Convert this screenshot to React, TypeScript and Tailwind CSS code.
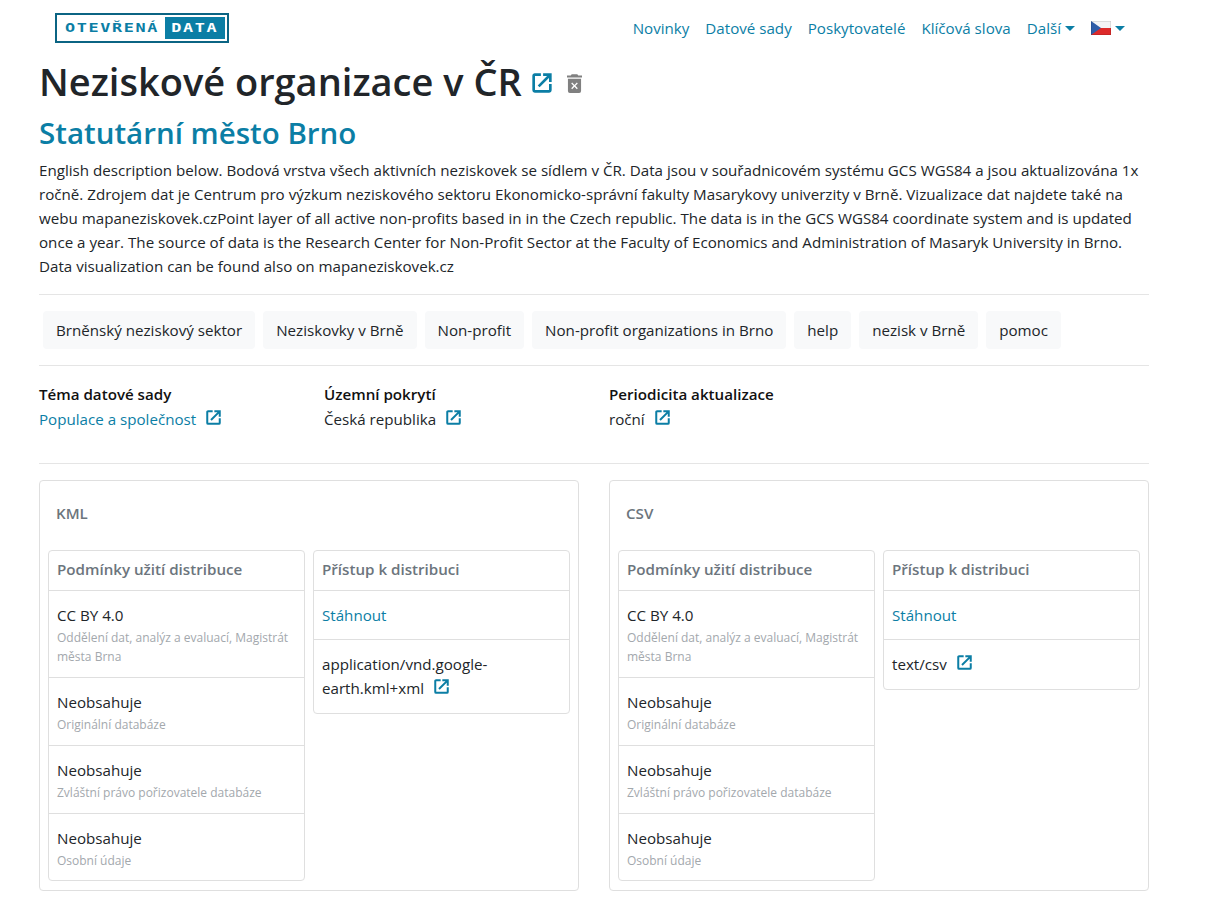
const LINK = "text-[#0b7ea5]"

function OpenIcon({ className = "h-[15px] w-[15px]" }: { className?: string }) {
  return (
    <svg viewBox="0 0 18 18" className={`${className} ${LINK} inline-block shrink-0`} fill="none" stroke="currentColor" strokeWidth="2.400">
      <path d="M8 1.500H2.500a1 1 0 0 0-1 1v13a1 1 0 0 0 1 1h13a1 1 0 0 0 1-1V10" />
      <path d="M6 12 15.500 2.500M10 1.500h6.500V8" />
    </svg>
  )
}

function TrashIcon() {
  return (
    <svg viewBox="0 0 16 20" className="h-[19px] w-[15px] text-[#808080]" fill="currentColor">
      <path d="M5 0h6l1 1.500h4v2H0v-2h4zM1 5h14v13a2 2 0 0 1-2 2H3a2 2 0 0 1-2-2z" />
      <path d="m5.500 9 2.500 2.500L10.500 9l1 1-2.500 2.500L11.500 15l-1 1L8 13.500 5.500 16l-1-1L7 12.500 4.500 10z" fill="#fff" />
    </svg>
  )
}

function Caret() {
  return <span className="ml-1 inline-block h-0 w-0 border-x-[5px] border-t-[5px] border-x-transparent border-t-[#0b7ea5] align-[3px]" />
}

function Flag() {
  return (
    <svg viewBox="0 0 20 14" className="h-[14px] w-[20px]">
      <rect width="20" height="7" fill="#f4f4f6" />
      <rect y="7" width="20" height="7" fill="#dd2a2a" />
      <path d="M0 0 10 7 0 14z" fill="#2f5da8" />
      <rect x=".25" y=".25" width="19.500" height="13.500" fill="none" stroke="#00000033" strokeWidth=".5" />
    </svg>
  )
}

function Logo() {
  return (
    <div className="flex h-[30px] w-[174px] items-center border-2 border-[#0b6483] pl-[8px] pr-[2px] font-['DejaVu_Sans_Mono',monospace] text-[12px] font-bold leading-none tracking-[1.170px]">
      <span className="flex-1 text-[#0b7ea5]">
        <span className="inline-block origin-left scale-x-[1.4]">OTEVŘENÁ</span>
      </span>
      <span className="flex h-[22px] w-[60px] items-center justify-center bg-[#0b7ea5] text-white">
        <span className="inline-block scale-x-[1.4]">DATA</span>
      </span>
    </div>
  )
}

const NAV = ["Novinky", "Datové sady", "Poskytovatelé", "Klíčová slova"]
const TAGS = ["Brněnský neziskový sektor", "Neziskovky v Brně", "Non-profit", "Non-profit organizations in Brno", "help", "nezisk v Brně", "pomoc"]

const TERMS = [
  { title: "CC BY 4.0", note: "Oddělení dat, analýz a evaluací, Magistrát města Brna" },
  { title: "Neobsahuje", note: "Originální databáze" },
  { title: "Neobsahuje", note: "Zvláštní právo pořizovatele databáze" },
  { title: "Neobsahuje", note: "Osobní údaje" },
]

function Distribution({ name, format }: { name: string; format: string }) {
  return (
    <div className="h-[411px] w-[540px] rounded border border-[#dfdfdf] p-2">
      <h5 className="h-[61px] px-2 pt-[12px] leading-6 font-semibold text-[#6c757d]">{name}</h5>
      <div className="flex gap-2">
        <div className="w-[257px] rounded border border-[#dfdfdf]">
          <div className="h-[40px] border-b border-[#dfdfdf] px-2 py-[6px] leading-6 font-semibold text-[#6c757d]">Podmínky užití distribuce</div>
          {TERMS.map((t, i) => (
            <div key={i} className="border-b border-[#dfdfdf] px-2 pt-[12px] pb-[10.600px] last:border-b-0">
              <div className="leading-6 text-[#212529]">{t.title}</div>
              <div className="mt-[1px] text-[12px] leading-[19.200px] text-[#a3a8ad]">{t.note}</div>
            </div>
          ))}
        </div>
        <div className="w-[257px] self-start rounded border border-[#dfdfdf]">
          <div className="h-[40px] border-b border-[#dfdfdf] px-2 py-[6px] leading-6 font-semibold text-[#6c757d]">Přístup k distribuci</div>
          <div className={`border-b border-[#dfdfdf] px-2 py-3 leading-6 ${LINK}`}>Stáhnout</div>
          <div className="px-2 pt-[12px] pb-[13px] leading-6 text-[#212529]">
            {format}
            <span className="-my-2 ml-[10px] inline-block align-[3px]"><OpenIcon /></span>
          </div>
        </div>
      </div>
    </div>
  )
}

export default function App() {
  return (
    <div className="min-h-[904px] bg-white font-['Open_Sans','Noto_Sans',sans-serif] text-[15.150px] leading-6 text-[#212529]">
      <div className="ml-[39px] w-[1110px]">
        <header className="flex h-[56px] items-center justify-between pl-4 pr-6">
          <Logo />
          <nav className={`flex items-center gap-4 ${LINK}`}>
            {NAV.map((n) => <a key={n}>{n}</a>)}
            <a>Další<Caret /></a>
            <a className="flex items-center"><Flag /><Caret /></a>
          </nav>
        </header>

        <div className="flex items-center gap-[10px]">
          <h1 className="text-[38px] leading-[50px] font-semibold">Neziskové organizace v ČR</h1>
          <span className="mt-[4px] flex"><OpenIcon className="h-[20px] w-[20px]" /></span>
          <span className="mt-[4px] ml-[5px] flex"><TrashIcon /></span>
        </div>
        <h2 className={`mt-[5px] text-[29.500px] leading-[44px] font-semibold ${LINK}`}>Statutární město Brno</h2>
        <p className="mt-[3px] pb-[10px]">English description below. Bodová vrstva všech aktivních neziskovek se sídlem v ČR. Data jsou v souřadnicovém systému GCS WGS84 a jsou aktualizována 1x ročně. Zdrojem dat je Centrum pro výzkum neziskového sektoru Ekonomicko-správní fakulty Masarykovy univerzity v Brně. Vizualizace dat najdete také na webu mapaneziskovek.czPoint layer of all active non-profits based in in the Czech republic. The data is in the GCS WGS84 coordinate system and is updated once a year. The source of data is the Research Center for Non-Profit Sector at the Faculty of Economics and Administration of Masaryk University in Brno. Data visualization can be found also on mapaneziskovek.cz</p>

        <hr className="mt-[6px] border-[#e5e5e5]" />
        <div className="flex gap-2 px-1 py-4">
          {TAGS.map((t) => (
            <span key={t} className="rounded bg-[#f8f9fa] px-[13px] py-[7px]">{t}</span>
          ))}
        </div>
        <hr className="border-[#e5e5e5]" />

        <div className="grid h-[97px] grid-cols-[285px_285px_285px] pt-[16px]">
          <div>
            <div className="font-semibold text-[#111]">Téma datové sady</div>
            <div className="mt-[1px]"><span className={LINK}>Populace a společnost</span><span className="-my-2 ml-[10px] inline-block align-[3px]"><OpenIcon /></span></div>
          </div>
          <div>
            <div className="font-semibold text-[#111]">Územní pokrytí</div>
            <div className="mt-[1px]">Česká republika<span className="-my-2 ml-[10px] inline-block align-[3px]"><OpenIcon /></span></div>
          </div>
          <div>
            <div className="font-semibold text-[#111]">Periodicita aktualizace</div>
            <div className="mt-[1px]">roční<span className="-my-2 ml-[10px] inline-block align-[3px]"><OpenIcon /></span></div>
          </div>
        </div>
        <hr className="border-[#e5e5e5]" />

        <div className="mt-4 flex gap-[30px]">
          <Distribution name="KML" format="application/vnd.google-earth.kml+xml" />
          <Distribution name="CSV" format="text/csv" />
        </div>
      </div>
    </div>
  )
}
